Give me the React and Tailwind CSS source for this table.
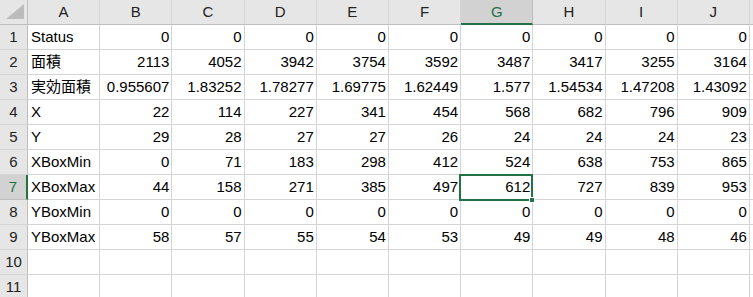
import React from "react";

const cols = ["A", "B", "C", "D", "E", "F", "G", "H", "I", "J"];

const rows = [
  ["Status", 0, 0, 0, 0, 0, 0, 0, 0, 0],
  ["面積", 2113, 4052, 3942, 3754, 3592, 3487, 3417, 3255, 3164],
  ["実効面積", 0.955607, 1.83252, 1.78277, 1.69775, 1.62449, 1.577, 1.54534, 1.47208, 1.43092],
  ["X", 22, 114, 227, 341, 454, 568, 682, 796, 909],
  ["Y", 29, 28, 27, 27, 26, 24, 24, 24, 23],
  ["XBoxMin", 0, 71, 183, 298, 412, 524, 638, 753, 865],
  ["XBoxMax", 44, 158, 271, 385, 497, 612, 727, 839, 953],
  ["YBoxMin", 0, 0, 0, 0, 0, 0, 0, 0, 0],
  ["YBoxMax", 58, 57, 55, 54, 53, 49, 49, 48, 46],
  [],
  [],
];

const SEL_COL = 6; // G
const SEL_ROW = 7;

export default function App() {
  return (
    <div
      className="h-[297px] w-[753px] overflow-hidden bg-white text-[15px] text-black"
      style={{ fontFamily: '"Liberation Sans", "Noto Sans CJK JP", sans-serif' }}
    >
      <div className="grid grid-cols-[28px_repeat(10,72.2px)_1fr] auto-rows-[25px]">
        {/* header row */}
        <div className="flex items-end justify-end border-b border-r border-[#bfbfbf] bg-[#e6e6e6] pb-[5px] pr-[3px]">
          <svg width="18" height="15" viewBox="0 0 18 15">
            <polygon points="18,0 18,15 0,15" fill="#bcbcbc" />
          </svg>
        </div>
        {cols.map((c, i) => (
          <div
            key={c}
            className={
              i === SEL_COL
                ? "flex items-center justify-center border-b-2 border-r border-b-[#217346] border-r-[#bfbfbf] bg-[#d2d2d2] pt-[1px] leading-[22px] text-[#217346]"
                : "flex items-center justify-center border-b border-r border-[#bfbfbf] border-r-[#d5d5d5] bg-[#e6e6e6] leading-[24px] text-[#222]"
            }
          >
            {c}
          </div>
        ))}
        <div className="border-b border-[#bfbfbf] bg-[#e6e6e6]" />

        {rows.map((r, ri) => {
          const n = ri + 1;
          const selRow = n === SEL_ROW;
          return (
            <React.Fragment key={n}>
              <div
                className={
                  selRow
                    ? "flex items-center justify-center border-b border-r-2 border-b-[#bfbfbf] border-r-[#217346] bg-[#d2d2d2] leading-[24px] text-[#217346]"
                    : "flex items-center justify-center border-b border-r border-[#bfbfbf] border-b-[#d5d5d5] bg-[#e6e6e6] leading-[24px] text-[#222]"
                }
              >
                {n}
              </div>
              {cols.map((c, ci) => {
                const v = r[ci];
                const isSel = selRow && ci === SEL_COL;
                return (
                  <div
                    key={c}
                    className={
                      "relative overflow-visible whitespace-nowrap border-b border-r border-[#d4d4d4] leading-[24px] " +
                      (ci === 0 ? "pl-[3px] text-left" : "pr-[2px] text-right") +
                      (isSel ? " z-10" : "")
                    }
                  >
                    {v === undefined ? "" : String(v)}
                    {isSel ? (
                      <>
                        <div className="pointer-events-none absolute -left-[2px] -top-[1px] bottom-[-2px] right-[-1px] border-2 border-[#217346]" />
                        <div className="absolute -bottom-[4px] -right-[3px] h-[6px] w-[6px] border border-white bg-[#217346]" />
                      </>
                    ) : null}
                  </div>
                );
              })}
              <div className="border-b border-[#d4d4d4]" />
            </React.Fragment>
          );
        })}
      </div>
    </div>
  );
}
